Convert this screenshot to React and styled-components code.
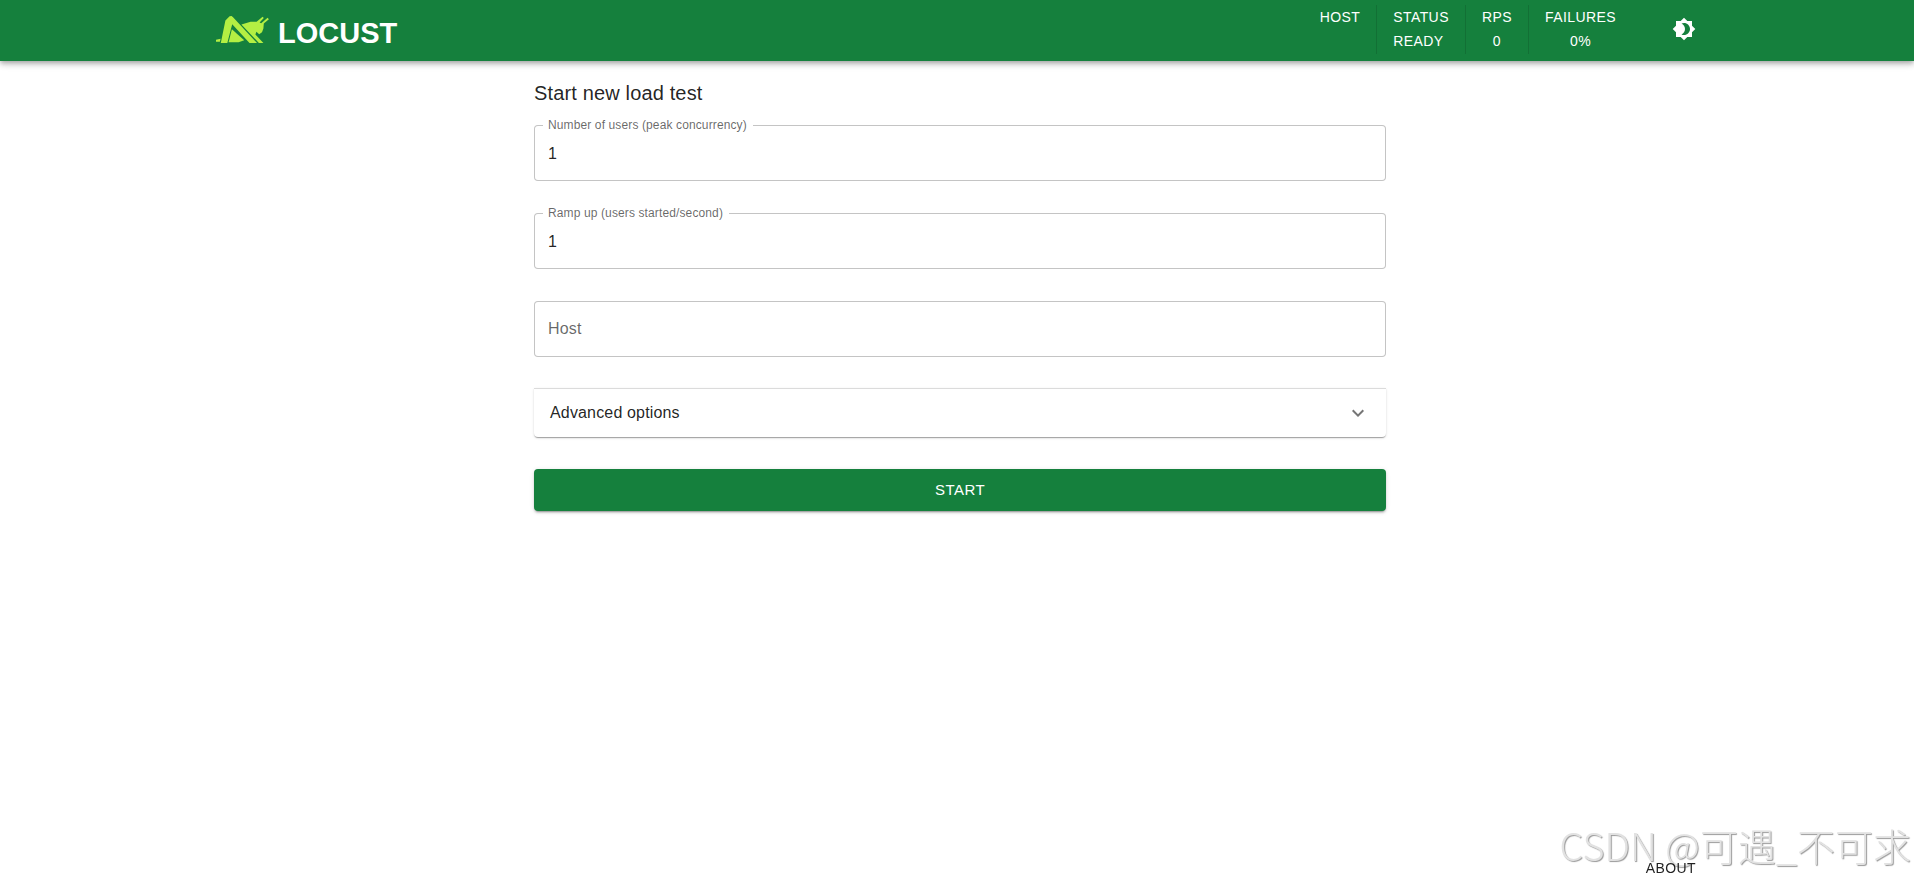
import React, { useState } from 'react'
import styled, { createGlobalStyle, css } from 'styled-components'
import { MdBrightness4, MdExpandMore } from 'react-icons/md'

const green = '#15803d'

const GlobalStyle = createGlobalStyle`
  * {
    box-sizing: border-box;
  }
  body {
    margin: 0;
    background: #fff;
    color: rgba(0, 0, 0, 0.87);
    font-family: 'Liberation Sans', Arial, sans-serif;
    font-size: 16px;
  }
`

const Page = styled.div`
  display: flex;
  flex-direction: column;
  min-height: 100vh;
`

const Header = styled.header`
  padding-left: 6px;
  background: ${green};
  color: #fff;
  box-shadow: 0 2px 4px -1px rgba(0, 0, 0, 0.2), 0 4px 5px rgba(0, 0, 0, 0.14),
    0 1px 10px rgba(0, 0, 0, 0.12);
`

const Container = styled.div`
  width: 100%;
  max-width: ${props => props.$width};
  margin: 0 auto;
  padding: 0 24px;
`

const Toolbar = styled(Container)`
  display: flex;
  align-items: center;
  justify-content: space-between;
  min-height: 61px;
  padding-bottom: 2px;
`

const Brand = styled.a`
  display: flex;
  align-items: center;
  gap: 9px;
  color: #fff;
  text-decoration: none;
`

const BrandName = styled.span`
  padding-top: 6px;
  font-size: 29px;
  font-weight: 700;
  line-height: 32px;
`

const ToolbarEnd = styled.div`
  display: flex;
  align-items: center;
  gap: 32px;
`

const Stats = styled.div`
  display: flex;
`

const Stat = styled.div`
  display: flex;
  flex-direction: column;
  align-items: ${props => (props.$left ? 'flex-start' : 'center')};
  min-height: 49px;
  padding: 0 16px;
  font-size: 14px;
  line-height: 24px;
  letter-spacing: 0.03em;
  text-transform: uppercase;

  & + & {
    border-left: 1px solid rgba(0, 0, 0, 0.12);
  }
`

const IconButton = styled.button`
  display: flex;
  padding: 7px 8px 9px;
  border: none;
  border-radius: 50%;
  background: none;
  color: #fff;
  font-size: 24px;
  cursor: pointer;
`

const Main = styled.main`
  flex: 1;
  padding: 16px 0 0 6px;
`

const Title = styled.h2`
  margin: 0 0 16px;
  font-size: 20px;
  font-weight: 400;
  line-height: 32px;
  letter-spacing: 0.0075em;
`

const Form = styled.form`
  display: flex;
  flex-direction: column;
  gap: 32px;
`

const Field = styled.div`
  position: relative;
`

const floating = css`
  top: -8px;
  left: 9px;
  padding: 0 6px 0 5px;
  font-size: 12px;
  line-height: 16px;
`

const Label = styled.label`
  position: absolute;
  top: 16px;
  left: 14px;
  background: #fff;
  color: rgba(0, 0, 0, 0.6);
  line-height: 24px;
  letter-spacing: 0.01em;
  pointer-events: none;
  ${props => props.$filled && floating}

  ${Field}:focus-within & {
    ${floating}
    color: ${green};
  }
`

const Input = styled.input`
  display: block;
  width: 100%;
  height: 56px;
  padding: 2px 13px 0;
  border: 1px solid rgba(0, 0, 0, 0.23);
  border-radius: 4px;
  background: #fff;
  color: inherit;
  font: inherit;

  &:focus {
    border-color: ${green};
    outline: 1px solid ${green};
  }
`

const Accordion = styled.button`
  display: flex;
  align-items: center;
  justify-content: space-between;
  height: 49px;
  margin-top: -1px;
  padding: 0 16px;
  border: none;
  border-top: 1px solid rgba(0, 0, 0, 0.14);
  border-radius: 0 0 4px 4px;
  background: #fff;
  box-shadow: 0 2px 1px -1px rgba(0, 0, 0, 0.2), 0 1px 1px rgba(0, 0, 0, 0.14),
    0 1px 3px rgba(0, 0, 0, 0.12);
  color: inherit;
  font: inherit;
  letter-spacing: 0.01em;
  cursor: pointer;
`

const Chevron = styled(MdExpandMore)`
  color: rgba(0, 0, 0, 0.54);
  font-size: 24px;
`

const StartButton = styled.button`
  height: 42px;
  padding: 0 0 2px;
  border: none;
  border-radius: 4px;
  background: ${green};
  box-shadow: 0 3px 1px -2px rgba(0, 0, 0, 0.2), 0 2px 2px rgba(0, 0, 0, 0.14),
    0 1px 5px rgba(0, 0, 0, 0.12);
  color: #fff;
  font: inherit;
  font-size: 15px;
  letter-spacing: 0.03em;
  text-transform: uppercase;
  cursor: pointer;
`

const Footer = styled.footer`
  padding-left: 6px;
`

const FooterBar = styled(Container)`
  display: flex;
  justify-content: flex-end;
`

const AboutButton = styled.button`
  position: relative;
  z-index: 1;
  padding: 0 8px;
  border: none;
  background: none;
  color: inherit;
  font: inherit;
  font-size: 14px;
  line-height: 24px;
  letter-spacing: 0.03em;
  text-transform: uppercase;
  cursor: pointer;
`

const Watermark = styled.div`
  position: fixed;
  right: 3px;
  bottom: 16px;
  color: #e2e2e2;
  font-family: 'Noto Sans CJK SC', sans-serif;
  font-size: 38px;
  font-weight: 300;
  line-height: 38px;
  text-shadow: 1px 1px 1px #999;
  white-space: nowrap;
  pointer-events: none;
`

function LocustMark() {
  return (
    <svg width="53" height="28" viewBox="0 0 53 28" fill="#b4ef43" aria-hidden="true">
      {/* front leg */}
      <path d="M13.6 0.2L15.6 0L17.3 1.4L41 27H33.5L16.2 8.2L11.3 27H4.8L9.4 4.4Z" />
      <path d="M0 23.8L4.6 22.8L3.9 25.8H0Z" />
      {/* wings */}
      <path d="M15.9 13.2L28.2 24.2L22.6 26.2H12.6Z" />
      {/* head and antennae */}
      <path d="M25.4 8.6L34.6 5.8H40.6L46.6 0.8L47.8 2L43.6 6.6L45.2 7.2L51.6 1.8L52.9 3.2L47.8 7.6L47.4 12.4L46 16.2L43.2 18.2L40.4 15.8L39.4 18.4L47.4 27H42.9Z" />
    </svg>
  )
}

function TextField({ id, label, defaultValue = '', type = 'text' }) {
  const [value, setValue] = useState(defaultValue)

  return (
    <Field>
      <Input id={id} type={type} value={value} onChange={e => setValue(e.target.value)} />
      <Label htmlFor={id} $filled={value !== ''}>{label}</Label>
    </Field>
  )
}

export default function App() {
  return (
    <Page>
      <GlobalStyle />
      <Header>
        <Toolbar $width="1536px">
          <Brand href="#">
            <LocustMark />
            <BrandName>LOCUST</BrandName>
          </Brand>
          <ToolbarEnd>
            <Stats>
              <Stat><span>Host</span></Stat>
              <Stat $left><span>Status</span><span>Ready</span></Stat>
              <Stat><span>RPS</span><span>0</span></Stat>
              <Stat><span>Failures</span><span>0%</span></Stat>
            </Stats>
            <IconButton type="button" aria-label="Toggle theme">
              <MdBrightness4 />
            </IconButton>
          </ToolbarEnd>
        </Toolbar>
      </Header>
      <Main>
        <Container $width="900px">
          <Title>Start new load test</Title>
          <Form onSubmit={e => e.preventDefault()}>
            <TextField id="users" label="Number of users (peak concurrency)" defaultValue="1" />
            <TextField id="rampUp" label="Ramp up (users started/second)" defaultValue="1" />
            <TextField id="host" label="Host" />
            <Accordion type="button" aria-expanded="false">
              Advanced options
              <Chevron />
            </Accordion>
            <StartButton type="submit">Start</StartButton>
          </Form>
        </Container>
      </Main>
      <Footer>
        <FooterBar $width="1536px">
          <AboutButton type="button">About</AboutButton>
        </FooterBar>
      </Footer>
      <Watermark>CSDN @可遇_不可求</Watermark>
    </Page>
  )
}
